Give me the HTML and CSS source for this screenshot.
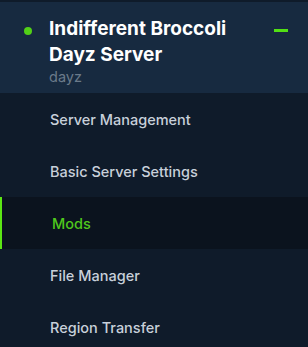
FILE: index.html
```html
<!DOCTYPE html>
<html>
<head lang="en">
<meta charset="UTF-8">
<title>Server</title>
<link rel="stylesheet" href="styles.css">
</head>
<body>
<div class="side">
    <div class="head">
        <span class="dot"></span>
        <div class="info">
            <h2>Indifferent Broccoli Dayz Server</h2>
            <p>dayz</p>
        </div>
        <span class="minus"></span>
    </div>
    <ul class="menu">
        <li><a href="javascript:;">Server Management</a></li>
        <li><a href="javascript:;">Basic Server Settings</a></li>
        <li class="on"><a href="javascript:;">Mods</a></li>
        <li><a href="javascript:;">File Manager</a></li>
        <li><a href="javascript:;">Region Transfer</a></li>
    </ul>
</div>
</body>
</html>
```

FILE: styles.css
```css
*{margin:0;padding:0;}
body{
	background:#0f1b2a;
	font-family:Inter,"Liberation Sans",sans-serif;
}
.side{width:308px;height:347px;overflow:hidden;}
.head{
	display:flex;
	align-items:flex-start;
	height:91px;
	background:#172a40;
	border-top:2px solid #0f1b2a;
}
.dot{
	width:8px;
	height:8px;
	border-radius:50%;
	background:#52d017;
	margin:25px 0 0 24px;
}
.info{flex:1;margin:14px 0 0 17px;}
.info h2{
	width:200px;
	font-size:19px;
	line-height:26px;
	font-weight:700;
	color:#fff;
}
.info p{
	font-size:14.5px;
	color:#6b7a8a;
	line-height:18px;
}
.minus{
	width:14px;
	height:3px;
	background:#52e014;
	margin:27px 20px 0 0;
}
ul{list-style:none;}
.menu li{
	height:52px;
	display:flex;
	align-items:center;
	padding-left:50px;
}
.menu a{
	text-decoration:none;
	color:#c8d0da;
	font-size:14.5px;
	font-weight:500;
}
.menu li.on{
	background:#0b131e;
	border-left:2px solid #5ce614;
	padding-left:50px;
}
.menu li.on a{color:#4fc81c;}
```
